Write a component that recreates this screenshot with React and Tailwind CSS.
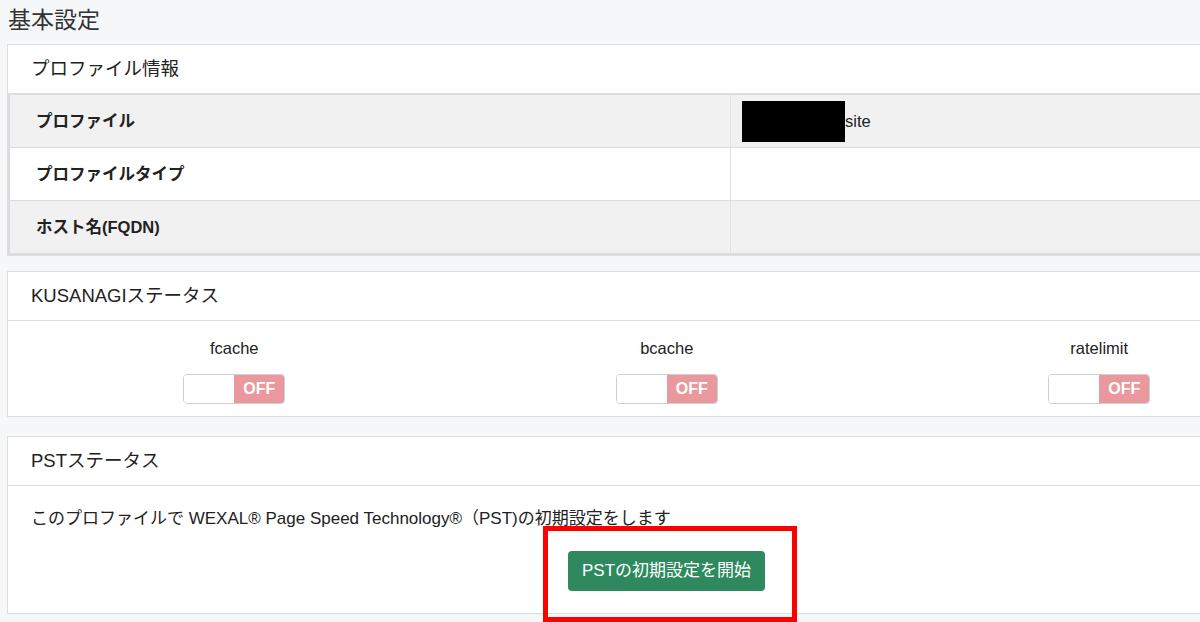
import React from 'react';

const font = { fontFamily: '"Liberation Sans", "Noto Sans CJK JP", sans-serif' };

function Toggle() {
  return (
    <div className="flex w-[102px] h-[30px] rounded-[4px] border border-[#cfcfcf] overflow-hidden">
      <div className="w-1/2 bg-white"></div>
      <div className="w-1/2 bg-[#ea989d] text-white font-bold text-[16px] flex items-center justify-center">OFF</div>
    </div>
  );
}

function Card({ title, children }) {
  return (
    <div className="bg-white border border-[#dedede]">
      <div className="h-[49px] flex items-center pl-[23px] text-[18.5px] text-[#222] border-b border-[#dedede]">{title}</div>
      {children}
    </div>
  );
}

export default function App() {
  const rows = [
    { label: 'プロファイル', value: 'site', grey: true },
    { label: 'プロファイルタイプ', value: '', grey: false },
    { label: 'ホスト名(FQDN)', value: '', grey: true },
  ];
  return (
    <div className="w-[1200px] h-[622px] overflow-hidden bg-[#f6f7f9] text-[#222]" style={font}>
      <div className="w-[1446px] pl-[7px]">
        <h1 className="h-[44px] flex items-center pl-px pb-[4px] text-[23px] text-[#333]">基本設定</h1>

        <Card title="プロファイル情報">
          <div className="border-l-2 border-b-2 border-[#dcdcdc]">
            {rows.map((r, i) => (
              <div key={i} className={`flex h-[53px] border-t border-[#dcdcdc] ${r.grey ? 'bg-[#f1f1f1]' : 'bg-white'}`}>
                <div className="w-[721px] pl-[26px] flex items-center font-bold text-[16.5px] border-r border-[#e2e2e2]">{r.label}</div>
                <div className="flex-1 pl-[11px] flex items-center text-[16.5px]">
                  {r.value && (
                    <>
                      <span className="inline-block w-[103px] h-[41px] bg-black"></span>
                      <span>{r.value}</span>
                    </>
                  )}
                </div>
              </div>
            ))}
          </div>
        </Card>

        <div className="mt-[15px]">
          <Card title="KUSANAGIステータス">
            <div className="flex pl-[10px] pt-[16px] pb-[12px]">
              {['fcache', 'bcache', 'ratelimit'].map((n) => (
                <div key={n} className="w-[432.5px] flex flex-col items-center">
                  <div className="h-[22px] text-[16.5px] leading-[22px]">{n}</div>
                  <div className="mt-[15px]"><Toggle /></div>
                </div>
              ))}
            </div>
          </Card>
        </div>

        <div className="mt-[19px]">
          <Card title="PSTステータス">
            <div className="pl-[23px] pt-[22px] pb-[22px]">
              <p className="text-[17px] leading-[22px]">このプロファイルで WEXAL® Page Speed Technology®（PST)の初期設定をします</p>
              <div className="mt-[21px] pl-[537px]">
                <div className="relative inline-block">
                  <button className="w-[197px] h-[40px] rounded-[4px] bg-[#2e8a5e] text-white text-[17px]">PSTの初期設定を開始</button>
                  <div className="absolute -left-[25px] -top-[25px] w-[254px] h-[96px] border-[5px] border-[#ff0000] pointer-events-none"></div>
                </div>
              </div>
            </div>
          </Card>
        </div>
      </div>
    </div>
  );
}
